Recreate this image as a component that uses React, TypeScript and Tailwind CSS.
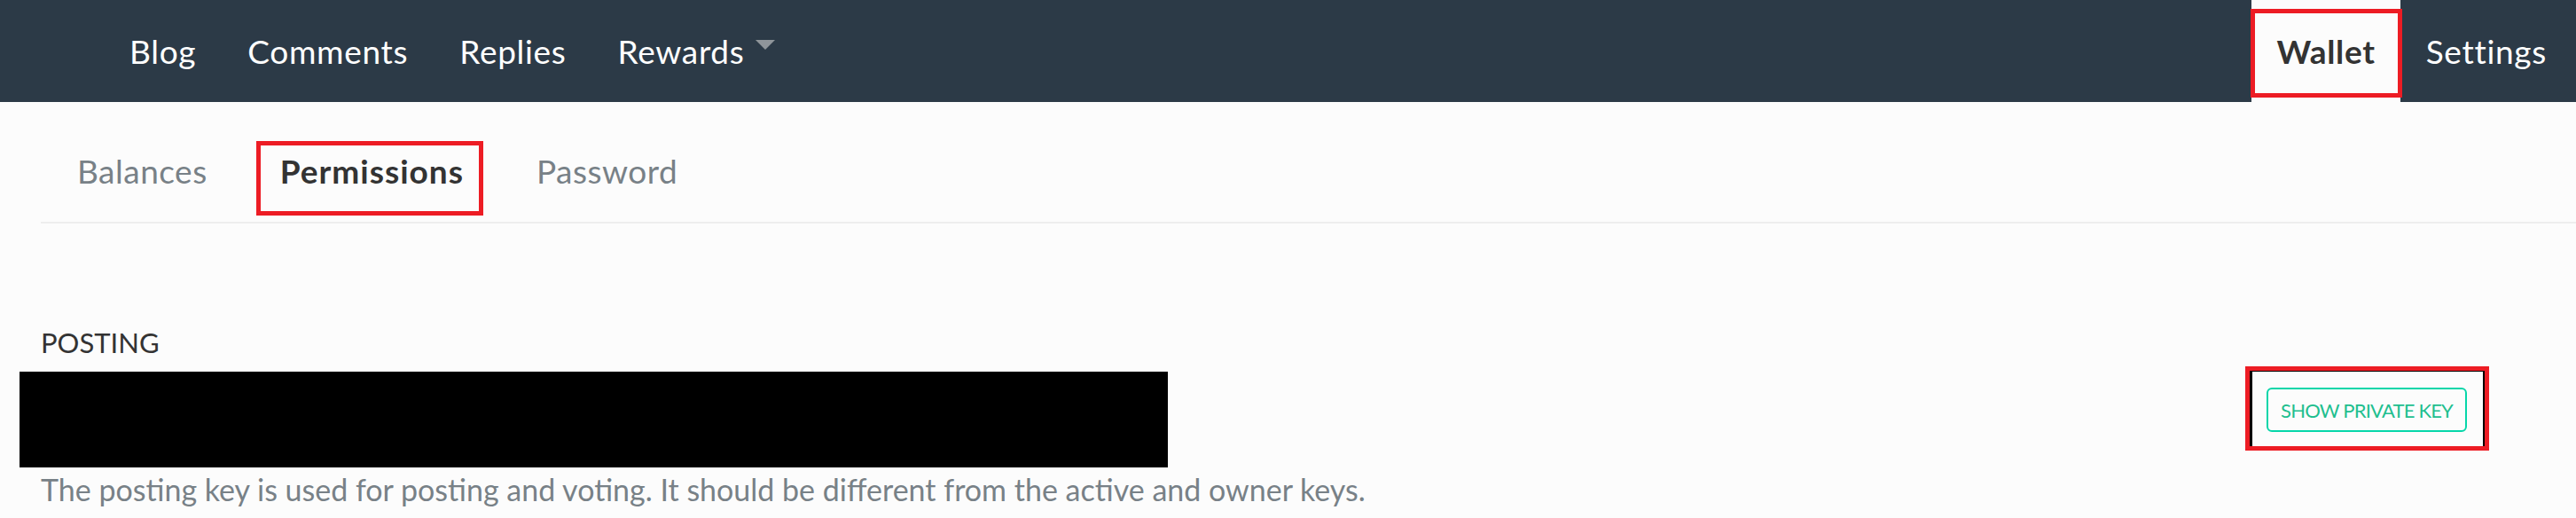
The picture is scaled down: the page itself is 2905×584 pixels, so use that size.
const LEFT_LINKS = ["Blog", "Comments", "Replies"];

const TABS = [
	{ label: "Balances", active: false },
	{ label: "Permissions", active: true },
	{ label: "Password", active: false },
];

// red annotation frame laid over highlighted items
function Marker({ className }: { className: string }) {
	return <span className={`pointer-events-none absolute border-[5px] border-[#ed1c24] ${className}`} />;
}

export default function App() {
	return (
		<div className="min-h-[584px] w-[2905px] bg-[#fcfcfc] font-['Lato',sans-serif]">
			<header className="flex h-[115px] items-stretch justify-between bg-[#2c3a47]">
				<nav className="flex items-center pl-[117px] text-[37px] tracking-[0.7px] text-white">
					{LEFT_LINKS.map((l) => (
						<a key={l} className="px-[29px]">
							{l}
						</a>
					))}
					<a className="flex items-center pl-[29px]">
						Rewards
						<span className="ml-[12px] mb-[14px] h-0 w-0 border-x-[11px] border-t-[11px] border-x-transparent border-t-[#8f959a]" />
					</a>
				</nav>
				<nav className="flex items-stretch text-[37px] tracking-[0.7px]">
					<a className="relative flex items-center bg-[#fcfcfc] px-[28px] font-bold text-[#333]">
						Wallet
						<Marker className="-left-px -right-[2px] top-[10px] bottom-[5px]" />
					</a>
					<a className="flex items-center pl-[29px] pr-[33px] text-white">Settings</a>
				</nav>
			</header>

			<ul className="ml-[46px] flex border-b-[2px] border-[#eeeeee] text-[37px] leading-[44px] tracking-[0.5px]">
				{TABS.map((t) => (
					<li
						key={t.label}
						className={`relative px-[41px] pt-[56px] pb-[35px] ${t.active ? "font-bold tracking-[1px] text-[#333]" : "text-[#788187]"}`}
					>
						{t.label}
						{t.active && <Marker className="left-[14px] right-[19px] top-[44px] bottom-[7px]" />}
					</li>
				))}
			</ul>

			<section className="px-[46px] pt-[116px]">
				<h3 className="text-[31px] leading-[37px] text-[#333]">POSTING</h3>
				<div className="mt-[14px] flex items-start justify-between pr-[77px]">
					<div className="-ml-[24px] h-[108px] w-[1295px] bg-black" />
					<div className="relative mt-[18px]">
						<button className="rounded-[6px] border-[2px] border-[#06d6a9] px-[14px] pt-[10px] pb-[9px] text-[22px] leading-[27px] tracking-[-0.8px] text-[#1fbf8f]">
							SHOW PRIVATE KEY
						</button>
						<span className="pointer-events-none absolute -left-[24px] -right-[25px] -top-[24px] -bottom-[21px] border-[5px] border-[#ed1c24]">
							<span className="absolute inset-0 border-t border-r-[2px] border-l-[3px] border-black" />
						</span>
					</div>
				</div>
				<p className="mt-[4px] text-[34px] leading-[41px] text-[#788187]">
					The posting key is used for posting and voting. It should be different from the active and owner keys.
				</p>
			</section>
		</div>
	);
}
